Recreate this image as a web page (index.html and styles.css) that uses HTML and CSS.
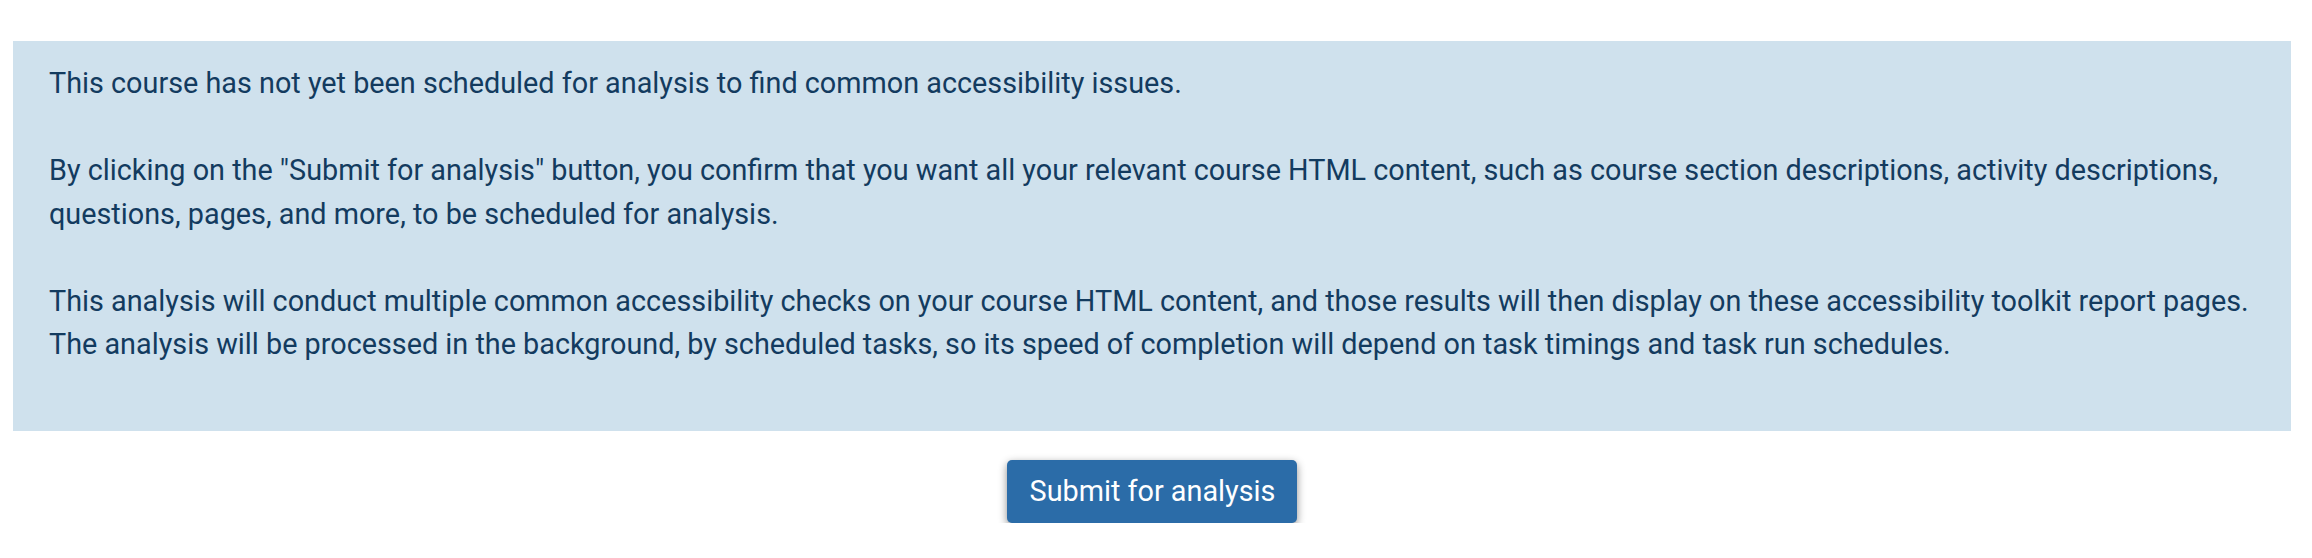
FILE: index.html
```html
<!DOCTYPE html>
<html lang="en">
<head>
    <meta charset="UTF-8">
    <meta name="viewport" content="width=device-width, initial-scale=1.0">
    <title>Accessibility toolkit</title>
    <link rel="stylesheet" href="styles.css">
</head>
<body>
    <div class="page_main">
        <div class="alert_info">
            <p>This course has not yet been scheduled for analysis to find common accessibility issues.</p>
            <p>By clicking on the "Submit for analysis" button, you confirm that you want all your relevant course HTML content, such as course section descriptions, activity descriptions, questions, pages, and more, to be scheduled for analysis.</p>
            <p>This analysis will conduct multiple common accessibility checks on your course HTML content, and those results will then display on these accessibility toolkit report pages.<br>The analysis will be processed in the background, by scheduled tasks, so its speed of completion will depend on task timings and task run schedules.</p>
        </div>
        <form class="submit_row" action="/" method="POST">
            <button type="submit" class="btn_primary">Submit for analysis</button>
        </form>
    </div>
</body>
</html>
```

FILE: styles.css
```css
*{margin: 0; padding: 0; box-sizing: border-box;}
body{background: #fff; font-family: Roboto, "Liberation Sans", sans-serif; font-size: 28.8px; line-height: 43.5px; color: #133b5f;}
.page_main{padding: 41px 21px 0 13px;}
.alert_info{background-color: #cfe1ed; padding: 21px 30px 64px 36px;}
.alert_info p{margin-bottom: 43.5px;}
.alert_info p:last-child{margin-bottom: 0;}
.submit_row{display: flex; justify-content: center; padding-top: 29px;}
.btn_primary{height: 63px; padding: 0 22px 0 23px; border: none; border-radius: 5px; background-color: #2b6ca8; color: #fff; font-family: Roboto, "Liberation Sans", sans-serif; font-size: 28.8px; cursor: pointer; box-shadow: 0 3px 8px rgba(0, 0, 0, 0.45);}
.btn_primary:hover{background-color: #235c91;}
```
